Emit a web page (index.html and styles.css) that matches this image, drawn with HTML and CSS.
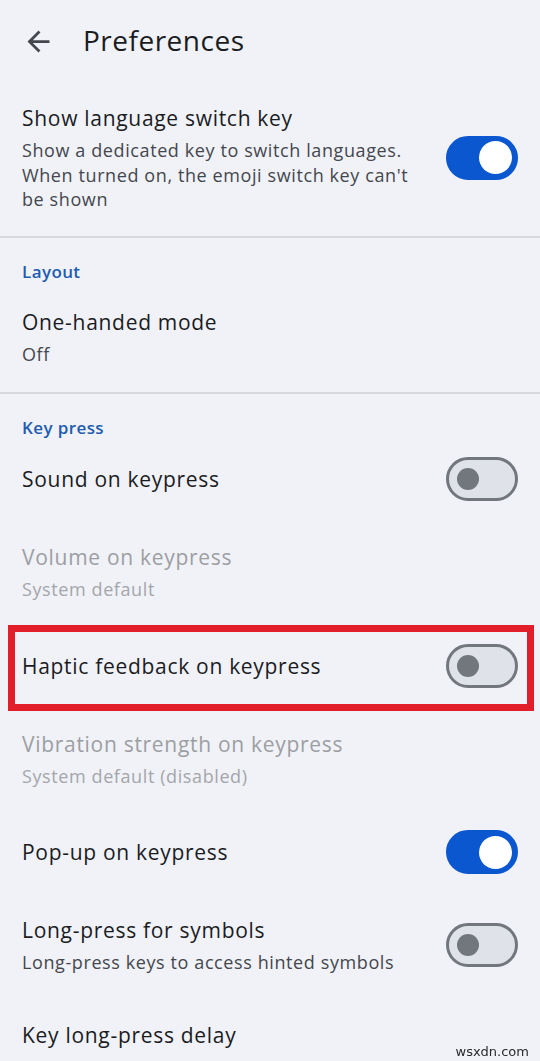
FILE: index.html
```html
<!DOCTYPE html>
<html lang="en">

<head>
    <meta charset="UTF-8">
    <meta name="viewport" content="width=device-width, initial-scale=1.0">
    <title>Preferences</title>
    <link rel="stylesheet" href="styles.css">
</head>

<body>
    <header class="appbar">
        <svg class="appbar__back" viewBox="0 0 24 24" width="33" height="33">
            <path d="M20 11H7.83l5.59-5.59L12 4l-8 8 8 8 1.41-1.41L7.83 13H20v-2z" />
        </svg>
        <div class="appbar__title">Preferences</div>
    </header>

    <div class="pref pref--first">
        <div class="pref__text">
            <div class="pref__title">Show language switch key</div>
            <div class="pref__summary">Show a dedicated key to switch languages. When turned on, the emoji switch key can't be shown</div>
        </div>
        <div class="switch switch--on"></div>
    </div>

    <div class="divider"></div>

    <div class="category">Layout</div>
    <div class="pref pref--roomy">
        <div class="pref__text">
            <div class="pref__title">One-handed mode</div>
            <div class="pref__summary">Off</div>
        </div>
    </div>

    <div class="divider"></div>

    <div class="category category--tight">Key press</div>
    <div class="pref">
        <div class="pref__text">
            <div class="pref__title">Sound on keypress</div>
        </div>
        <div class="switch"></div>
    </div>

    <div class="pref pref--disabled">
        <div class="pref__text">
            <div class="pref__title">Volume on keypress</div>
            <div class="pref__summary">System default</div>
        </div>
    </div>

    <div class="pref pref--marked">
        <div class="pref__text">
            <div class="pref__title">Haptic feedback on keypress</div>
        </div>
        <div class="switch"></div>
        <div class="mark"></div>
    </div>

    <div class="pref pref--disabled">
        <div class="pref__text">
            <div class="pref__title">Vibration strength on keypress</div>
            <div class="pref__summary">System default (disabled)</div>
        </div>
    </div>

    <div class="pref">
        <div class="pref__text">
            <div class="pref__title">Pop-up on keypress</div>
        </div>
        <div class="switch switch--on"></div>
    </div>

    <div class="pref">
        <div class="pref__text">
            <div class="pref__title">Long-press for symbols</div>
            <div class="pref__summary">Long-press keys to access hinted symbols</div>
        </div>
        <div class="switch"></div>
    </div>

    <div class="pref pref--spaced">
        <div class="pref__text">
            <div class="pref__title">Key long-press delay</div>
            <div class="pref__summary">300 ms</div>
        </div>
    </div>

    <div class="watermark">wsxdn.com</div>
</body>

</html>
```

FILE: styles.css
```css
* {
    box-sizing: border-box;
}

html,
body {
    width: 100%;
    height: 100%;
}

body {
    margin: 0;
    padding: 0;
    overflow: hidden;
    font-family: "Open Sans", Roboto, sans-serif;
    background-color: #f0f2f7;
    color: #1b1c1f;
}

.appbar {
    height: 80px;
    display: flex;
    align-items: center;
    padding-left: 22px;
    column-gap: 28px;
}

.appbar__back {
    fill: #44474e;
    margin-top: 2px;
}

.appbar__title {
    font-size: 28px;
    line-height: 36px;
    letter-spacing: 0.5px;
}

.pref {
    position: relative;
    display: flex;
    align-items: center;
    column-gap: 16px;
    padding: 21px 22px 21px 22px;
}

.pref--first {
    padding-top: 24px;
    padding-bottom: 24px;
}

.pref--roomy {
    padding-top: 21px;
    padding-bottom: 26px;
}

.pref--spaced {
    padding-top: 25px;
}

.pref__text {
    flex: 1;
    min-width: 0;
}

.pref__title {
    font-size: 21px;
    line-height: 28px;
    letter-spacing: 0.7px;
}

.pref__summary {
    margin-top: 6px;
    font-size: 18px;
    line-height: 24.5px;
    letter-spacing: 0.6px;
    color: #44474e;
}

.pref--disabled .pref__title {
    color: #9c9ea3;
}

.pref--disabled .pref__summary {
    color: #a4a6ab;
}

.divider {
    height: 2px;
    background-color: #d6d9de;
}

.category {
    padding: 26px 22px 7px;
    font-size: 17px;
    line-height: 16px;
    font-weight: 600;
    letter-spacing: 0.4px;
    color: #1e5cb0;
}

.category--tight {
    padding-bottom: 0;
}

/* material switch, 1.375x of the 52x32 spec */
.switch {
    position: relative;
    flex: none;
    width: 72px;
    height: 44px;
    border-radius: 22px;
    border: 3px solid #72767d;
    background-color: #dfe2e8;
}

.switch::after {
    content: "";
    position: absolute;
    left: 8px;
    top: 8px;
    width: 22px;
    height: 22px;
    border-radius: 50%;
    background-color: #72767d;
}

.switch--on {
    border-color: #0b57d0;
    background-color: #0b57d0;
}

.switch--on::after {
    left: 30px;
    top: 2.5px;
    width: 33px;
    height: 33px;
    background-color: #fff;
}

.mark {
    position: absolute;
    top: 2px;
    left: 8px;
    right: 6px;
    bottom: -2px;
    border: 7px solid #e31e2b;
}

.watermark {
    position: fixed;
    right: 11px;
    bottom: 0;
    font-family: "DejaVu Sans", sans-serif;
    font-size: 13px;
    line-height: 18px;
    color: #2a2a2a;
}
```
